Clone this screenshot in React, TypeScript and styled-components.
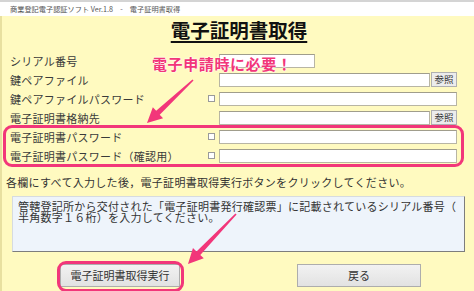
import styled, { createGlobalStyle } from 'styled-components';

const GlobalStyle = createGlobalStyle`
	html, body {
		margin: 0;
		padding: 0;
		background: #fffac0;
	}
	body {
		font-family: "Noto Sans CJK JP", "Noto Sans", sans-serif;
		color: #333;
	}
`;

type FieldRow = {
	label: string;
	check?: boolean;
	width?: number;
	browse?: boolean;
};

const rows: FieldRow[] = [
	{ label: 'シリアル番号', width: 94 },
	{ label: '鍵ペアファイル', browse: true },
	{ label: '鍵ペアファイルパスワード', check: true },
	{ label: '電子証明書格納先', browse: true },
	{ label: '電子証明書パスワード', check: true },
	{ label: '電子証明書パスワード（確認用）', check: true },
];

function Arrow(props: { x1: number; y1: number; x2: number; y2: number }) {
	const { x1, y1, x2, y2 } = props;
	const dx = x2 - x1;
	const dy = y2 - y1;
	const len = Math.hypot(dx, dy);
	const ux = dx / len;
	const uy = dy / len;
	const nx = -uy;
	const ny = ux;
	const head = 15;
	const bx = x2 - ux * head;
	const by = y2 - uy * head;
	// 꼬리는 가늘고 머리 쪽으로 갈수록 굵어지는 화살표
	const pts = [
		[x1 + nx * 0.8, y1 + ny * 0.8],
		[bx + nx * 2.6, by + ny * 2.6],
		[bx + nx * 7.5, by + ny * 7.5],
		[x2, y2],
		[bx - nx * 7.5, by - ny * 7.5],
		[bx - nx * 2.6, by - ny * 2.6],
		[x1 - nx * 0.8, y1 - ny * 0.8],
	]
		.map((p) => p.join(','))
		.join(' ');
	return (
		<ArrowSvg width="474" height="291" viewBox="0 0 474 291">
			<polygon points={pts} fill="#f2367a" />
		</ArrowSvg>
	);
}

export default function App(): JSX.Element {
	return (
		<Window>
			<GlobalStyle />
			<TitleBar>商業登記電子認証ソフト Ver.1.8　-　電子証明書取得</TitleBar>
			<Body>
				<Heading>電子証明書取得</Heading>
				<Form>
					{rows.map((r) => (
						<Row key={r.label}>
							<Label>{r.label}</Label>
							<CheckCell>{r.check && <CheckBox />}</CheckCell>
							<FieldCell>
								<TextInput $width={r.width} />
								{r.browse && <BrowseButton>参照</BrowseButton>}
							</FieldCell>
						</Row>
					))}
				</Form>
				<Notice>各欄にすべて入力した後，電子証明書取得実行ボタンをクリックしてください。</Notice>
				<MessageBox>
					管轄登記所から交付された「電子証明書発行確認票」に記載されているシリアル番号（半角数字１６桁）を入力してください。
				</MessageBox>
				<ButtonBar>
					<ActionButton $width={120}>電子証明書取得実行</ActionButton>
					<ActionButton $width={124}>戻る</ActionButton>
				</ButtonBar>
			</Body>

			<Callout>電子申請時に必要！</Callout>
			<Arrow x1={193} y1={80} x2={147} y2={123} />
			<Arrow x1={236} y1={214} x2={188} y2={264} />
			<Highlight $left={3} $top={125} $width={461} $height={42} />
			<Highlight $left={57} $top={261} $width={127} $height={31} />
		</Window>
	);
}

const Window = styled.div`
	position: relative;
	width: 474px;
	height: 291px;
	overflow: hidden;
	background: #fffac0;
`;

const TitleBar = styled.div`
	height: 14px;
	border-top: 2px solid #d4d4d4;
	background: #fff;
	padding-left: 10px;
	font-size: 7.2px;
	line-height: 14px;
	color: #555;
	white-space: nowrap;
`;

const Body = styled.div`
	display: flex;
	flex-direction: column;
	height: 275px;
	border-left: 2px solid #e8e0a0;
	box-sizing: border-box;
`;

const Heading = styled.div`
	height: 35px;
	padding-top: 3px;
	box-sizing: border-box;
	text-align: center;
	padding-left: 2px;
	font-size: 19.5px;
	font-weight: bold;
	line-height: 22px;
	color: #111;
	text-decoration: underline;
	text-decoration-thickness: 1.5px;
	text-underline-offset: 3px;
`;

const Form = styled.div`
	display: flex;
	flex-direction: column;
	padding-left: 8px;
`;

const Row = styled.div`
	display: grid;
	grid-template-columns: 196px 13px 238px;
	align-items: center;
	height: 19px;
`;

const Label = styled.div`
	font-size: 11px;
	letter-spacing: 0.25px;
	line-height: 14px;
	color: #3a3a3a;
	white-space: nowrap;
`;

const CheckCell = styled.div`
	display: flex;
	align-items: center;
	padding-left: 2px;
`;

const CheckBox = styled.div`
	width: 5px;
	height: 5px;
	background: #fff;
	border: 1px solid #9a9a9a;
`;

const FieldCell = styled.div`
	display: flex;
	align-items: center;
	gap: 1px;
`;

const TextInput = styled.div<{ $width?: number }>`
	flex: ${(p) => (p.$width ? `0 0 ${p.$width}px` : '1 1 auto')};
	height: 12px;
	background: #fff;
	border: 1px solid #b8b5a4;
	border-top-color: #a09d8c;
	box-sizing: content-box;
`;

const BrowseButton = styled.div`
	flex: 0 0 24px;
	height: 13px;
	border: 1px solid #b0b0b0;
	background: #ececec;
	font-size: 9.5px;
	line-height: 13px;
	text-align: center;
	color: #333;
`;

const Notice = styled.div`
	padding: 10px 0 7px 4px;
	font-size: 11px;
	letter-spacing: 0.3px;
	line-height: 14px;
	color: #333;
	white-space: nowrap;
`;

const MessageBox = styled.div`
	margin-left: 10px;
	width: 453px;
	height: 56px;
	box-sizing: border-box;
	padding: 4px 2px 0 5px;
	background: #eef4fb;
	border: 1px solid #d6dbe0;
	border-right-color: #7d7d7d;
	border-bottom-color: #7d7d7d;
	font-size: 11px;
	letter-spacing: 0.25px;
	line-height: 11px;
	color: #333;
	line-break: anywhere;
`;

const ButtonBar = styled.div`
	display: flex;
	gap: 117px;
	padding: 12px 0 0 58px;
`;

const ActionButton = styled.div<{ $width: number }>`
	width: ${(p) => p.$width}px;
	height: 23px;
	box-sizing: border-box;
	border: 1px solid #adadad;
	background: linear-gradient(#f2f2f2, #e2e2e2);
	font-size: 11px;
	line-height: 21px;
	text-align: center;
	color: #333;
`;

const Callout = styled.div`
	position: absolute;
	left: 152px;
	top: 54px;
	font-size: 15px;
	font-weight: bold;
	letter-spacing: 0.6px;
	line-height: 20px;
	color: #f2367a;
	text-shadow: 0 0 2px #fff, 0 0 2px #fff;
	white-space: nowrap;
`;

const ArrowSvg = styled.svg`
	position: absolute;
	left: 0;
	top: 0;
	pointer-events: none;
`;

const Highlight = styled.div<{ $left: number; $top: number; $width: number; $height: number }>`
	position: absolute;
	left: ${(p) => p.$left}px;
	top: ${(p) => p.$top}px;
	width: ${(p) => p.$width}px;
	height: ${(p) => p.$height}px;
	box-sizing: border-box;
	border: 3px solid #f2367a;
	border-radius: 9px;
	pointer-events: none;
`;
